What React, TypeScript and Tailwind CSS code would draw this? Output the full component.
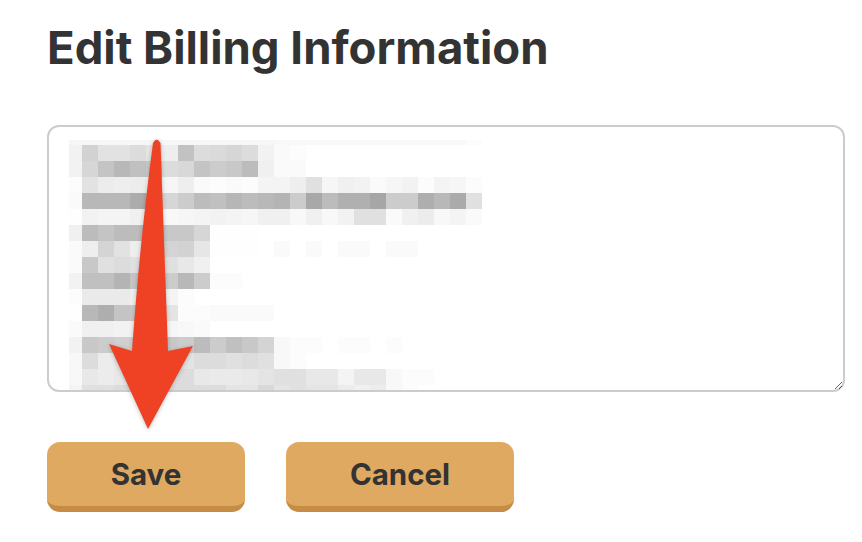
import React from "react";

// pixelated (redacted) billing text: one hex grey per 16px block, first column 13px wide
const mosaic: string[] = [
  "f6 f6 f6 f6 f6 f6 f6 f6 f6 f6 f6 f6 f6 f8 f8 f8 f8 f8 f8 f8 f8 f8 f8 f8 f8 fc",
  "f2 d2 e2 e2 dc e4 ee c2 dc da d6 dc f2 fa fc ff ff ff ff ff ff ff ff ff ff ff",
  "f2 d6 c4 b8 c0 c8 dc d8 c4 cc c8 bc f0 fa fa ff ff ff ff ff ff ff ff ff ff ff",
  "fc e2 ec ee ec f0 f6 ee fa fc fa fc f4 f4 ee e0 f6 f0 f2 fa f6 f2 fc f4 f6 fc",
  "fa b8 b8 b8 ac c4 d6 cc bc c0 b6 bc b8 b4 cc a8 bc b0 b0 a6 cc cc ae b8 aa e0",
  "fe f2 f4 f4 f0 f8 f8 f6 f4 f2 f4 f6 f0 f0 f8 f0 f8 f2 e0 e0 fa f0 ec f8 f4 fa",
  "f0 bc c4 bc bc c8 c8 c8 d6 fe fe fe ff ff ff ff ff ff ff ff ff ff ff ff ff ff",
  "fa ee d4 e2 ee e0 d4 d2 e6 fe fe fe ff fa ff fa ff fa fa ff fa fa ff ff ff ff",
  "fa c8 e0 dc e0 dc e0 e8 f0 ff ff ff ff ff ff ff ff ff ff ff ff ff ff ff ff ff",
  "f2 c0 c0 b4 c4 c8 cc b8 cc fc fc ff ff ff ff ff ff ff ff ff ff ff ff ff ff ff",
  "fc ea ea ea ee f0 f4 fc ff ff ff ff ff ff ff ff ff ff ff ff ff ff ff ff ff ff",
  "fe b8 ae c4 c8 d0 e4 fc fc fa fa fa fa ff ff ff ff ff ff ff ff ff ff ff ff ff",
  "fa f0 f0 f2 f2 f4 f6 f8 fa ff ff ff ff ff ff ff ff ff ff ff ff ff ff ff ff ff",
  "f2 c8 cc d0 d0 cc c8 cc bc cc c0 c8 d4 f8 fc fc ff fc fc ff fc ff ff ff ff ff",
  "f8 dc ec e8 e4 e0 dc e4 dc dc e0 dc e0 f8 fc ff ff ff ff ff ff ff ff ff ff ff",
  "f8 e8 ec e8 e8 e4 e0 dc e8 ea ea e8 e4 e0 e0 e8 e8 f4 e8 e8 f8 fc fc ff ff ff",
  "f4 e0 e0 dc dc dc dc dc dc dc e4 e4 d8 e4 e0 e4 e4 ec f0 ec f8 fc ff ff ff ff",
];

function Mosaic() {
  const rowH = (r: number) => (r === 0 ? 5 : 16);
  let y = 0;
  return (
    <svg width={413} height={253} className="block">
      {mosaic.map((row, r) => {
        const top = y;
        y += rowH(r);
        return row.split(" ").map((v, c) => (
          <rect
            key={`${r}-${c}`}
            x={c === 0 ? 0 : 13 + (c - 1) * 16}
            y={top}
            width={c === 0 ? 13 : 16}
            height={rowH(r)}
            fill={`#${v}${v}${v}`}
          />
        ));
      })}
    </svg>
  );
}

function Arrow() {
  return (
    <svg
      width={862}
      height={542}
      className="pointer-events-none absolute left-0 top-0"
      style={{ filter: "drop-shadow(0 1px 2px rgba(0,0,0,0.25))" }}
    >
      <path
        d="M153 143 Q156.5 136 160.5 143 L168 351 L193 346 L148 429 L109 344 L132 351 Q140 240 153 143 Z"
        fill="#ef4225"
      />
    </svg>
  );
}

export default function App() {
  return (
    <div className="relative h-[542px] w-[862px] overflow-hidden bg-white font-['Inter','Liberation_Sans',sans-serif] text-[#333333]">
      <div className="px-[47px] pt-[20px]">
        <h1 className="text-[45.5px] font-bold leading-[55px]">Edit Billing Information</h1>

        <div className="mt-[50px] h-[267px] w-[798px] resize overflow-hidden rounded-[12px] border-2 border-[#cccccc] bg-white pl-[20px] pt-[13px]">
          <Mosaic />
        </div>

        <div className="mt-[50px] flex gap-[41px]">
          <button className="h-[70px] w-[198px] rounded-[13px] border-b-[6px] border-[#c68c45] bg-[#dfa961] text-[29.5px] font-bold text-[#333333]">
            Save
          </button>
          <button className="h-[70px] w-[228px] rounded-[13px] border-b-[6px] border-[#c68c45] bg-[#dfa961] text-[29.5px] font-bold text-[#333333]">
            Cancel
          </button>
        </div>
      </div>
      <Arrow />
    </div>
  );
}
